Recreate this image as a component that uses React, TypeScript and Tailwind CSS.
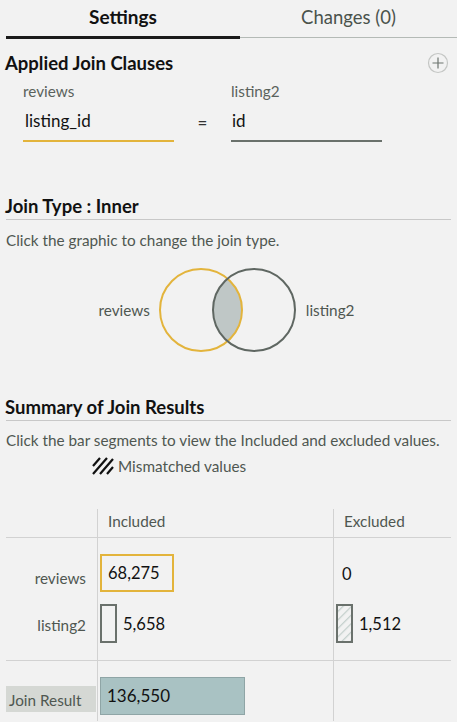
import React from 'react'

const font = "font-['Lato','Liberation_Sans',sans-serif]"

const Hatch = ({ id, color }: { id: string; color: string }) => (
  <pattern id={id} width="6" height="6" patternUnits="userSpaceOnUse" patternTransform="rotate(45)">
    <rect width="6" height="6" fill="#f2f2f2" />
    <line x1="0" y1="0" x2="0" y2="6" stroke={color} strokeWidth="2.5" />
  </pattern>
)

const SectionTitle = ({ children }: { children: React.ReactNode }) => (
  <div className="px-[5px]">
    <h2 className="text-[18.5px] font-bold text-[#111] leading-[24px]">{children}</h2>
    <div className="mt-[1px] h-px bg-[#c8c8c8] mx-[1px]" />
  </div>
)

const App = () => {
  return (
    <div className={`w-[457px] h-[722px] overflow-hidden bg-[#f2f2f2] text-[#222] ${font}`}>
      {/* tabs */}
      <div className="flex h-[39px] items-end">
        <div className="w-[240px] pl-[6px] h-full flex flex-col">
          <div className="flex-1 flex items-center justify-center text-[19px] font-bold text-[#111] pb-[2px]">Settings</div>
          <div className="h-[3px] bg-[#1a1a1a]" />
        </div>
        <div className="flex-1 h-full flex flex-col">
          <div className="flex-1 flex items-center justify-center text-[18.5px] text-[#4a524c] pb-[2px]">Changes (0)</div>
          <div className="h-px bg-[#b4bab6] mb-[1px]" />
        </div>
      </div>

      {/* applied join clauses */}
      <div className="flex items-center justify-between pl-[5px] pr-[8px] mt-[12px]">
        <h2 className="text-[18.5px] font-bold text-[#111] leading-[24px]">Applied Join Clauses</h2>
        <svg width="22" height="22" viewBox="0 0 22 22">
          <circle cx="11" cy="11" r="9.5" fill="none" stroke="#c4c6c4" strokeWidth="1.2" />
          <path d="M11 5.5v11M5.5 11h11" stroke="#6d746f" strokeWidth="1.2" />
        </svg>
      </div>
      <div className="flex mt-[6px] pl-[23px]">
        <div className="w-[151px]">
          <div className="text-[15.3px] text-[#5a625c] leading-[20px]">reviews</div>
          <div className="mt-[9px] text-[17px] text-[#111] leading-[22px] pl-[2px]">listing_id</div>
          <div className="mt-[8px] h-[2px] bg-[#e3b43c]" />
        </div>
        <div className="w-[57px] flex items-center justify-center pt-[22px] text-[17px] text-[#333]">=</div>
        <div className="w-[151px]">
          <div className="text-[15.3px] text-[#5a625c] leading-[20px]">listing2</div>
          <div className="mt-[9px] text-[17px] text-[#111] leading-[22px] pl-[1px]">id</div>
          <div className="mt-[8px] h-[2px] bg-[#6a716c]" />
        </div>
      </div>

      {/* join type */}
      <div className="mt-[52px]">
        <SectionTitle>Join Type : Inner</SectionTitle>
      </div>
      <p className="px-[6px] mt-[10px] text-[15.3px] text-[#4f5751] leading-[20px]">Click the graphic to change the join type.</p>
      <div className="flex items-center justify-center mt-[17px] pr-[4px]">
        <span className="text-[15.3px] text-[#4f5751] mr-[8px]">reviews</span>
        <svg width="140" height="86" viewBox="0 0 140 86">
          <defs>
            <clipPath id="leftc">
              <circle cx="43" cy="43" r="41" />
            </clipPath>
          </defs>
          <circle cx="96" cy="43" r="41" fill="#bfc7c6" clipPath="url(#leftc)" />
          <circle cx="43" cy="43" r="41" fill="none" stroke="#e3b43c" strokeWidth="2" />
          <circle cx="96" cy="43" r="41" fill="none" stroke="#5f6762" strokeWidth="2" />
        </svg>
        <span className="text-[15.3px] text-[#4f5751] ml-[8px]">listing2</span>
      </div>

      {/* summary */}
      <div className="mt-[42px]">
        <SectionTitle>Summary of Join Results</SectionTitle>
      </div>
      <p className="px-[6px] mt-[9px] text-[15.3px] text-[#4f5751] leading-[20px] whitespace-nowrap">
        Click the bar segments to view the Included and excluded values.
      </p>
      <div className="flex items-center pl-[92px] mt-[5px]">
        <svg width="22" height="18" viewBox="0 0 22 18">
          <path d="M1 9L8 1M1 17L15 1M8 17L21 2M15 17L21 10" stroke="#111" strokeWidth="2.2" />
        </svg>
        <span className="ml-[4px] text-[15.3px] text-[#4f5751]">Mismatched values</span>
      </div>

      {/* table */}
      <div className="mt-[31px] grid grid-cols-[97px_236px_1fr]">
        <div className="h-[28px]" />
        <div className="border-l border-[#d2d2d2] pl-[10px] pt-[1px] text-[15.3px] text-[#4f5751]">Included</div>
        <div className="border-l border-[#d2d2d2] pl-[10px] pt-[1px] text-[15.3px] text-[#4f5751]">Excluded</div>

        <div className="col-span-3 mx-[6px] h-px bg-[#d2d2d2]" />

        {/* reviews row */}
        <div className="flex items-center justify-end pr-[11px] pt-[22px] h-[60px] text-[15.3px] text-[#4f5751]">reviews</div>
        <div className="border-l border-[#d2d2d2] pl-[2px] pt-[16px] h-[60px]">
          <div className="w-[74px] h-[38px] border-2 border-[#e3b43c] flex items-center pl-[6px] text-[16.5px] text-[#111]">68,275</div>
        </div>
        <div className="border-l border-[#d2d2d2] pl-[8px] pt-[24px] h-[60px] text-[16.5px] text-[#111]">0</div>

        {/* listing2 row */}
        <div className="flex items-center justify-end pr-[11px] h-[62px] pb-[10px] pt-[4px] text-[15.3px] text-[#4f5751]">listing2</div>
        <div className="border-l border-[#d2d2d2] pl-[2px] pt-[6px] h-[62px] flex items-start">
          <div className="w-[17px] h-[39px] border-2 border-[#6a716c]" />
          <span className="ml-[6px] mt-[8px] text-[16.5px] text-[#111]">5,658</span>
        </div>
        <div className="border-l border-[#d2d2d2] pl-[2px] pt-[6px] h-[62px] flex items-start">
          <svg width="17" height="39" viewBox="0 0 17 39">
            <defs>
              <Hatch id="hatchx" color="#c3cfcc" />
            </defs>
            <rect x="1" y="1" width="15" height="37" fill="url(#hatchx)" stroke="#6a716c" strokeWidth="2" />
          </svg>
          <span className="ml-[6px] mt-[8px] text-[16.5px] text-[#111]">1,512</span>
        </div>

        <div className="col-span-3 mx-[6px] h-px bg-[#d2d2d2]" />

        {/* join result */}
        <div className="pl-[6px] pt-[25px] h-[60px]">
          <div className="w-[90px] h-[26px] bg-[#d5d8d4] flex items-center pl-[3px] pt-[3px] text-[15.3px] text-[#4f5751]">Join Result</div>
        </div>
        <div className="border-l border-[#d2d2d2] pl-[2px] pt-[16px] h-[60px]">
          <div className="w-[145px] h-[38px] bg-[#a9c2c3] border border-[#8fa5a6] flex items-center pl-[6px] text-[17px] text-[#111]">136,550</div>
        </div>
        <div className="border-l border-[#d2d2d2] h-[60px]" />
      </div>
    </div>
  )
}

export default App
